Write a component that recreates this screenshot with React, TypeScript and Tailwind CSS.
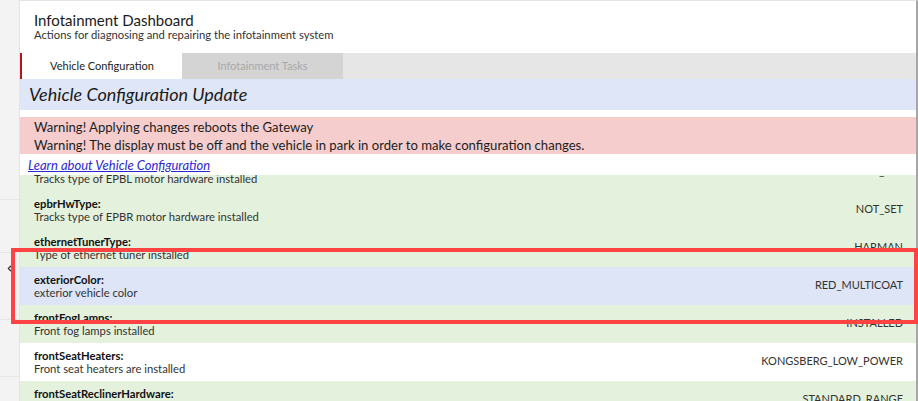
import { ChevronLeft } from "lucide-react";

type Tone = "green" | "blue" | "white";

interface ConfigRow {
  name: string;
  description: string;
  value: string;
  tone: Tone;
}

const rows: ConfigRow[] = [
  {
    name: "epblHwType",
    description: "Tracks type of EPBL motor hardware installed",
    value: "NOT_SET",
    tone: "green",
  },
  {
    name: "epbrHwType",
    description: "Tracks type of EPBR motor hardware installed",
    value: "NOT_SET",
    tone: "green",
  },
  {
    name: "ethernetTunerType",
    description: "Type of ethernet tuner installed",
    value: "HARMAN",
    tone: "green",
  },
  {
    name: "exteriorColor",
    description: "exterior vehicle color",
    value: "RED_MULTICOAT",
    tone: "blue",
  },
  {
    name: "frontFogLamps",
    description: "Front fog lamps installed",
    value: "INSTALLED",
    tone: "green",
  },
  {
    name: "frontSeatHeaters",
    description: "Front seat heaters are installed",
    value: "KONGSBERG_LOW_POWER",
    tone: "white",
  },
  {
    name: "frontSeatReclinerHardware",
    description: "Front seat recliner hardware installed",
    value: "STANDARD_RANGE",
    tone: "green",
  },
];

const toneBg: Record<Tone, string> = {
  green: "bg-[#e3f1dd]",
  blue: "bg-[#dde5f7]",
  white: "bg-white",
};

function SidePanel() {
  return (
    <aside className="relative flex w-[20px] shrink-0 flex-col border-r border-[#e3e3e3] bg-[#f3f3f3]">
      <div className="h-[200px] border-b border-[#e6e6e6]" />
      <div className="h-[53px] border-b border-[#e6e6e6]" />
      <div className="flex h-[67px] items-start justify-center border-b border-[#e6e6e6] pt-[11px]">
        <ChevronLeft className="h-[9px] w-[9px] text-[#333]" strokeWidth={3.5} />
      </div>
      <div className="h-[57px] border-b border-[#e6e6e6]" />
      <div className="flex-1" />
    </aside>
  );
}

function Row({ row }: { row: ConfigRow }) {
  return (
    <div
      className={`flex h-[38px] items-center justify-between pl-[14px] pr-[13px] ${toneBg[row.tone]}`}
    >
      <div className="flex flex-col pb-[1px] text-[11.25px] leading-[13px]">
        <span className="font-bold text-[#111]">{row.name}:</span>
        <span className="text-[#333]">{row.description}</span>
      </div>
      <span className="pb-[2px] text-[11px] text-[#333]">{row.value}</span>
    </div>
  );
}

export default function App() {
  return (
    <div className="relative flex h-[401px] w-[918px] overflow-hidden bg-white font-['Lato',sans-serif] text-[#222]">
      <SidePanel />

      <main className="flex min-w-0 flex-1 flex-col border-r-2 border-t border-r-[#a6a6a6] border-t-[#e4e4e4]">
        {/* page header */}
        <header className="h-[52px] pl-[14px] pt-[11px]">
          <h1 className="text-[15px] leading-[17px] text-[#1a1a1a]">
            Infotainment Dashboard
          </h1>
          <p className="text-[11.25px] leading-[12px] text-[#333]">
            Actions for diagnosing and repairing the infotainment system
          </p>
        </header>

        {/* tabs */}
        <nav className="flex h-[26px] bg-[#e6e6e6] text-[11px]">
          <div className="flex w-[162px] items-center justify-center border-l-2 border-[#b3191c] bg-white text-[#222]">
            Vehicle Configuration
          </div>
          <div className="flex w-[161px] items-center justify-center bg-[#d4d4d4] text-[#a8a8a8]">
            Infotainment Tasks
          </div>
        </nav>

        <h2 className="flex h-[31px] items-center bg-[#dfe6f7] pl-[9px] text-[18px] italic text-[#1a1a1a]">
          Vehicle Configuration Update
        </h2>

        <div className="h-[7px]" />

        <div className="h-[37px] bg-[#f5cdcd] pl-[14px] pt-[1px] text-[13.1px] leading-[18px] text-[#1e1e1e]">
          <p>Warning! Applying changes reboots the Gateway</p>
          <p>
            Warning! The display must be off and the vehicle in park in order to
            make configuration changes.
          </p>
        </div>

        <div className="h-[21px] pl-[8px] pt-[4px] text-[13px] leading-[15px]">
          <a href="#" className="italic text-[#2a2ad0] underline">
            Learn about Vehicle Configuration
          </a>
        </div>

        {/* scrolled list of config keys */}
        <div className="min-h-0 flex-1 overflow-hidden">
          <div className="-mt-[22px]">
            {rows.map((row) => (
              <Row key={row.name} row={row} />
            ))}
          </div>
        </div>
      </main>

      {/* highlight around the selected key */}
      <div className="pointer-events-none absolute left-[11px] top-[248px] h-[76px] w-[907px] border-4 border-[#ff4343]" />
    </div>
  );
}
